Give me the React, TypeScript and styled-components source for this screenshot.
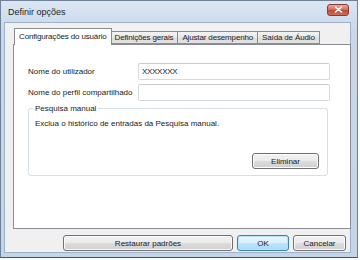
import styled, { createGlobalStyle } from "styled-components";

const Global = createGlobalStyle`
  html, body {
    margin: 0;
    padding: 0;
    background: #ffffff;
  }
  body {
    font-family: "Liberation Sans", Arial, sans-serif;
    font-size: 8px;
    color: #1a1a1a;
  }
`

const Window = styled.div`
  width: 358px;
  height: 258px;
  box-sizing: border-box;
  border: 1px solid #6f8197;
  border-bottom-color: #2f5a72;
  background: linear-gradient(#dbe6f3, #c8d8ea 30px, #c4d5e8);
  display: flex;
  flex-direction: column;
  padding: 0 6px 4px 3px;
`

const TitleBar = styled.div`
  height: 21px;
  display: flex;
  align-items: center;
  justify-content: space-between;
  padding-left: 4px;
  padding-right: 2px;
`

const Title = styled.span`
  font-size: 9px;
  color: #1e1e1e;
  margin-top: 1px;
`

const CloseButton = styled.div`
  width: 20px;
  height: 10px;
  margin-top: -4px;
  border: 1px solid #8a3a30;
  border-radius: 3px;
  background: linear-gradient(#e8aa9f, #d0705f 45%, #c04a38 55%, #cf6c58);
  display: flex;
  align-items: center;
  justify-content: center;
`

const Client = styled.div`
  flex: 1;
  background: #f0f0f0;
  border: 1px solid #9fb1c6;
  display: flex;
  flex-direction: column;
  padding: 4px 1px 0 8px;
`

const TabRow = styled.div`
  display: flex;
  align-items: flex-end;
  height: 17px;
  padding-left: 1px;
  position: relative;
  z-index: 1;
`

const Tab = styled.div<{ $active?: boolean }>`
  box-sizing: border-box;
  height: ${p => (p.$active ? "17px" : "13px")};
  padding: 0 4px;
  margin: ${p => (p.$active ? "0 -1px -1px 0" : "0")};
  border: 1px solid #898c95;
  border-bottom: ${p => (p.$active ? "none" : "1px solid #898c95")};
  border-left: ${p => (p.$active ? "1px solid #898c95" : "none")};
  background: ${p => (p.$active ? "#ffffff" : "linear-gradient(#f3f3f3, #e6e6e6 50%, #dcdcdc 51%, #e3e3e3)")};
  display: flex;
  align-items: center;
  white-space: nowrap;
  letter-spacing: -0.15px;
  color: #1a1a1a;
  position: relative;
  z-index: ${p => (p.$active ? 2 : 1)};
  padding-bottom: ${p => (p.$active ? "2px" : "0")};
`

const Panel = styled.div`
  height: 185px;
  width: 338px;
  box-sizing: border-box;
  background: #ffffff;
  border: 1px solid #898c95;
  padding: 18px 0 0 14px;
  display: flex;
  flex-direction: column;
`

const FieldRow = styled.div`
  display: grid;
  grid-template-columns: 110px 192px;
  align-items: center;
  height: 17px;
  margin-bottom: 4px;
`

const Label = styled.span`
  color: #1a1a1a;
`

const Input = styled.div`
  height: 17px;
  box-sizing: border-box;
  border: 1px solid #d6d9dd;
  border-top-color: #c9ccd1;
  border-radius: 2px;
  background: #ffffff;
  padding-left: 3px;
  display: flex;
  align-items: center;
  letter-spacing: -0.3px;
`

const Group = styled.fieldset`
  margin: -1px 0 0 0;
  width: 300px;
  height: 72px;
  box-sizing: border-box;
  border: 1px solid #d5dfe5;
  border-radius: 3px;
  padding: 0 8px 0 6px;
`

const Legend = styled.legend`
  padding: 0 2px;
  margin-left: -2px;
  color: #1a1a1a;
`

const GroupText = styled.div`
  margin-top: 6px;
  color: #1a1a1a;
`

const GroupFooter = styled.div`
  margin-top: 25px;
  display: flex;
  justify-content: flex-end;
`

const Button = styled.div<{ $width: number; $default?: boolean }>`
  width: ${p => p.$width}px;
  height: 16px;
  box-sizing: border-box;
  border: 1px solid ${p => (p.$default ? "#3c7fb1" : "#707070")};
  border-radius: 3px;
  background: ${p =>
    p.$default
      ? "linear-gradient(#eaf6fd, #d9f0fc 50%, #bee6fd 51%, #a7d9f5)"
      : "linear-gradient(#f2f2f2, #ebebeb 50%, #dddddd 51%, #cfcfcf)"};
  box-shadow: inset 0 0 0 1px ${p => (p.$default ? "#b9e3f8" : "#fcfcfc")};
  display: flex;
  align-items: center;
  justify-content: center;
  color: #1a1a1a;
`

const Footer = styled.div`
  display: flex;
  justify-content: flex-end;
  gap: 4px;
  margin-top: 6px;
  padding-right: 3px;
`

const CloseIcon = () => (
  <svg width="9" height="7" viewBox="0 0 9 7">
    <path d="M1.5 1 L7.5 6 M7.5 1 L1.5 6" stroke="#ffffff" strokeWidth="1.6" strokeLinecap="round" />
  </svg>
)

const App = () => {
  return (
    <>
      <Global />
      <Window>
        <TitleBar>
          <Title>Definir opções</Title>
          <CloseButton>
            <CloseIcon />
          </CloseButton>
        </TitleBar>
        <Client>
          <TabRow>
            <Tab $active>Configurações do usuário</Tab>
            <Tab>Definições gerais</Tab>
            <Tab>Ajustar desempenho</Tab>
            <Tab>Saída de Áudio</Tab>
          </TabRow>
          <Panel>
            <FieldRow>
              <Label>Nome do utilizador</Label>
              <Input>XXXXXXX</Input>
            </FieldRow>
            <FieldRow>
              <Label>Nome do perfil compartilhado</Label>
              <Input />
            </FieldRow>
            <Group>
              <Legend>Pesquisa manual</Legend>
              <GroupText>Exclua o histórico de entradas da Pesquisa manual.</GroupText>
              <GroupFooter>
                <Button $width={67}>Eliminar</Button>
              </GroupFooter>
            </Group>
          </Panel>
          <Footer>
            <Button $width={170}>Restaurar padrões</Button>
            <Button $width={52} $default>OK</Button>
            <Button $width={53}>Cancelar</Button>
          </Footer>
        </Client>
      </Window>
    </>
  )
}

export default App
